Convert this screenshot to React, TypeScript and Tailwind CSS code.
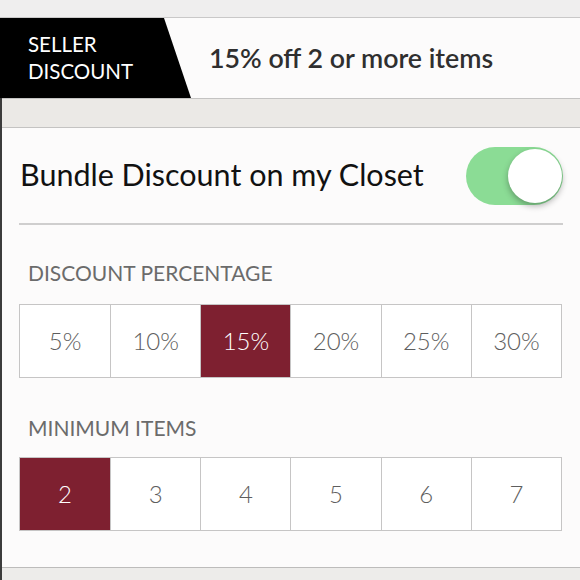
import React, { useState } from 'react';

const percents = ['5%', '10%', '15%', '20%', '25%', '30%'];
const minimums = ['2', '3', '4', '5', '6', '7'];

const font = { fontFamily: 'Lato, "Open Sans", sans-serif' };

interface SegmentsProps {
  options: string[];
  selected: string;
  onSelect: (v: string) => void;
}

const Segments: React.FC<SegmentsProps> = ({ options, selected, onSelect }) => (
  <div className="grid grid-cols-6 h-[74px] border border-[#c6c5c5] bg-white">
    {options.map((opt, i) => {
      const active = opt === selected;
      return (
        <button
          key={opt}
          onClick={() => onSelect(opt)}
          className={`flex items-center justify-center text-[24px] font-light ${
            i > 0 ? 'border-l border-[#c6c5c5]' : ''
          } ${active ? 'bg-[#7e2030] text-white' : 'text-[#5e5e5e]'}`}
        >
          {opt}
        </button>
      );
    })}
  </div>
);

export default function App() {
  const [enabled, setEnabled] = useState(true);
  const [percent, setPercent] = useState('15%');
  const [minimum, setMinimum] = useState('2');

  return (
    <div className="w-[580px] h-[580px] overflow-hidden bg-[#edecea] flex flex-col" style={font}>
      <div className="h-[18px] bg-[#efeeee] border-b border-[#c9c8c8]" />

      <div className="h-[80px] bg-[#fcfbfb] flex items-center relative">
        <div className="absolute inset-y-0 left-0 w-[191px]">
          <svg width="191" height="80" viewBox="0 0 191 80" className="block">
            <polygon points="0,0 164,0 191,80 0,80" fill="#000" />
          </svg>
        </div>
        <div className="relative w-[209px] pl-[28px] text-white text-[20.5px] leading-[27px]">
          SELLER
          <br />
          DISCOUNT
        </div>
        <div className="relative text-[#2f2f2f] text-[26.75px] font-semibold">15% off 2 or more items</div>
      </div>

      <div className="flex-1 flex flex-col border-l-2 border-[#3c3c3c]">
        <div className="h-[30px] border-y border-[#c4c3c2] bg-[#ebe9e6]" />

        <div className="h-[440px] bg-[#fcfbfb] border-b border-[#bdbcbb] px-[17px]">
          <div className="h-[97px] flex items-center justify-between border-b-2 border-[#cfcece]">
            <span className="text-[30.5px] text-[#111] pl-[1px] pb-[2px]">Bundle Discount on my Closet</span>
            <button
              onClick={() => setEnabled(!enabled)}
              className={`relative w-[97px] h-[58px] rounded-full ${enabled ? 'bg-[#8bdc95]' : 'bg-[#e4e4e4]'}`}
            >
              <span
                className={`absolute top-[2px] w-[54px] h-[54px] rounded-full bg-white shadow-[0_3px_6px_rgba(0,0,0,0.3)] ${
                  enabled ? 'right-[1px]' : 'left-[1px]'
                }`}
              />
            </button>
          </div>

          <div className="pt-[36px] pl-[9px] text-[21px] text-[#6b6b6b] leading-[24px]">DISCOUNT PERCENTAGE</div>
          <div className="mt-[19px] pr-[1px]">
            <Segments options={percents} selected={percent} onSelect={setPercent} />
          </div>

          <div className="pt-[38px] pl-[9px] text-[21px] text-[#6b6b6b] leading-[24px]">MINIMUM ITEMS</div>
          <div className="mt-[17px] pr-[1px]">
            <Segments options={minimums} selected={minimum} onSelect={setMinimum} />
          </div>
        </div>
      </div>
    </div>
  );
}
